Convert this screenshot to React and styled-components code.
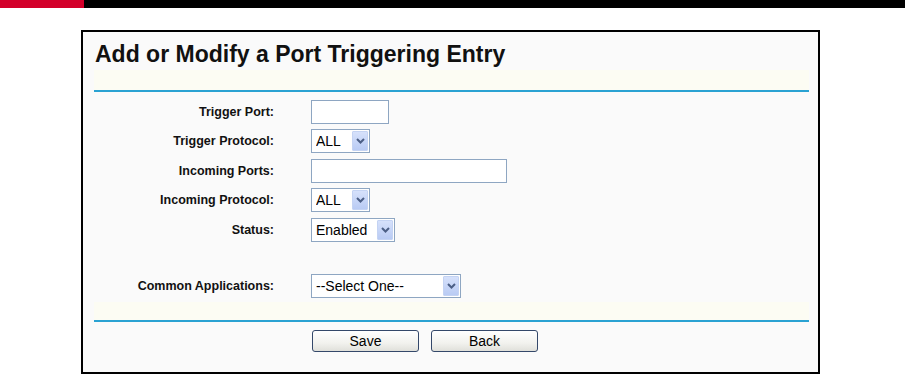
import React from "react";
import styled, { createGlobalStyle } from "styled-components";

const GlobalStyle = createGlobalStyle`
  html, body { margin: 0; padding: 0; background: #ffffff; }
  body { font-family: "Liberation Sans", Arial, sans-serif; color: #000; }
`;

const TopBar = styled.div`
  display: flex;
  height: 8px;
  width: 905px;
`;

const TopRed = styled.div`
  width: 84px;
  background: #d3002a;
`;

const TopBlack = styled.div`
  flex: 1;
  background: #000;
`;

const Page = styled.div`
  padding: 22px 0 0 81px;
`;

const Panel = styled.div`
  box-sizing: border-box;
  width: 739px;
  border: 2px solid #000;
  background: #fafafa;
  padding: 0 9px 0 11px;
`;

const Title = styled.h1`
  margin: 0;
  height: 38px;
  box-sizing: border-box;
  padding: 7px 0 0 1px;
  font-size: 23px;
  line-height: 31px;
  font-weight: bold;
  white-space: nowrap;
  color: #111;
`;

const Band = styled.div`
  height: ${(p) => p.$h}px;
  background: #fcfcf3;
  border-bottom: 2px solid #2aa2d2;
`;

const Form = styled.div`
  display: grid;
  grid-template-columns: 180px 1fr;
  grid-template-rows: repeat(5, 29.5px) 26.75px 29.5px;
  column-gap: 37px;
  align-items: center;
  padding: 5px 0 1.25px;
`;

const Spacer = styled.div`
  grid-column: 1 / -1;
`;

const Label = styled.label`
  text-align: right;
  font-size: 12.5px;
  font-weight: bold;
  white-space: nowrap;
  color: #111;
`;

const Cell = styled.div`
  display: flex;
  align-items: center;
`;

const TextInput = styled.input`
  box-sizing: border-box;
  width: ${(p) => p.$w}px;
  height: 24px;
  border: 1px solid #8ea6c2;
  background: #fff;
  padding: 0 3px;
  font: 14px "Liberation Sans", Arial, sans-serif;
  outline: none;
`;

const SelectWrap = styled.div`
  box-sizing: border-box;
  width: ${(p) => p.$w}px;
  height: 24px;
  border: 1px solid #8ea6c2;
  background: #fff;
  display: flex;
  align-items: stretch;
  padding: 1px;
`;

const NativeSelect = styled.select`
  appearance: none;
  -webkit-appearance: none;
  flex: 1;
  min-width: 0;
  border: none;
  background: transparent;
  padding: 0 0 0 3px;
  margin: 0;
  font: 14px "Liberation Sans", Arial, sans-serif;
  color: #000;
  outline: none;
`;

const ArrowBox = styled.span`
  width: 16px;
  box-sizing: border-box;
  border: 1px solid #c4d3f3;
  border-radius: 1px;
  background: linear-gradient(#d6e1fb, #b9cbf4);
  display: flex;
  align-items: center;
  justify-content: center;
`;

const Chevron = () => (
  <svg width="9" height="6" viewBox="0 0 9 6">
    <polyline
      points="1,1 4.5,4.5 8,1"
      fill="none"
      stroke="#4c5f86"
      strokeWidth="2"
    />
  </svg>
);

const Select = ({ w, value, options }) => (
  <SelectWrap $w={w}>
    <NativeSelect defaultValue={value}>
      {options.map((o) => (
        <option key={o}>{o}</option>
      ))}
    </NativeSelect>
    <ArrowBox>
      <Chevron />
    </ArrowBox>
  </SelectWrap>
);

const ButtonRow = styled.div`
  display: grid;
  grid-template-columns: 180px 1fr;
  column-gap: 38px;
  padding: 8px 0 20px;
`;

const Buttons = styled.div`
  display: flex;
  gap: 12px;
`;

const Button = styled.button`
  box-sizing: border-box;
  width: 107px;
  height: 22px;
  border: 1px solid #34486a;
  border-radius: 3px;
  background: linear-gradient(#ffffff, #f2f2ee 60%, #e0e0da);
  font: 14px "Liberation Sans", Arial, sans-serif;
  color: #000;
  padding: 0;
`;

export default function App() {
  const protocols = ["ALL", "TCP", "UDP"];
  return (
    <>
      <GlobalStyle />
      <TopBar>
        <TopRed />
        <TopBlack />
      </TopBar>
      <Page>
        <Panel>
          <Title>Add or Modify a Port Triggering Entry</Title>
          <Band $h={20} />
          <Form>
            <Label>Trigger Port:</Label>
            <Cell>
              <TextInput $w={78} />
            </Cell>
            <Label>Trigger Protocol:</Label>
            <Cell>
              <Select w={59} value="ALL" options={protocols} />
            </Cell>
            <Label>Incoming Ports:</Label>
            <Cell>
              <TextInput $w={196} />
            </Cell>
            <Label>Incoming Protocol:</Label>
            <Cell>
              <Select w={59} value="ALL" options={protocols} />
            </Cell>
            <Label>Status:</Label>
            <Cell>
              <Select w={84} value="Enabled" options={["Enabled", "Disabled"]} />
            </Cell>
            <Spacer />
            <Label>Common Applications:</Label>
            <Cell>
              <Select w={150} value="--Select One--" options={["--Select One--"]} />
            </Cell>
          </Form>
          <Band $h={18} />
          <ButtonRow>
            <span />
            <Buttons>
              <Button>Save</Button>
              <Button>Back</Button>
            </Buttons>
          </ButtonRow>
        </Panel>
      </Page>
    </>
  );
}
